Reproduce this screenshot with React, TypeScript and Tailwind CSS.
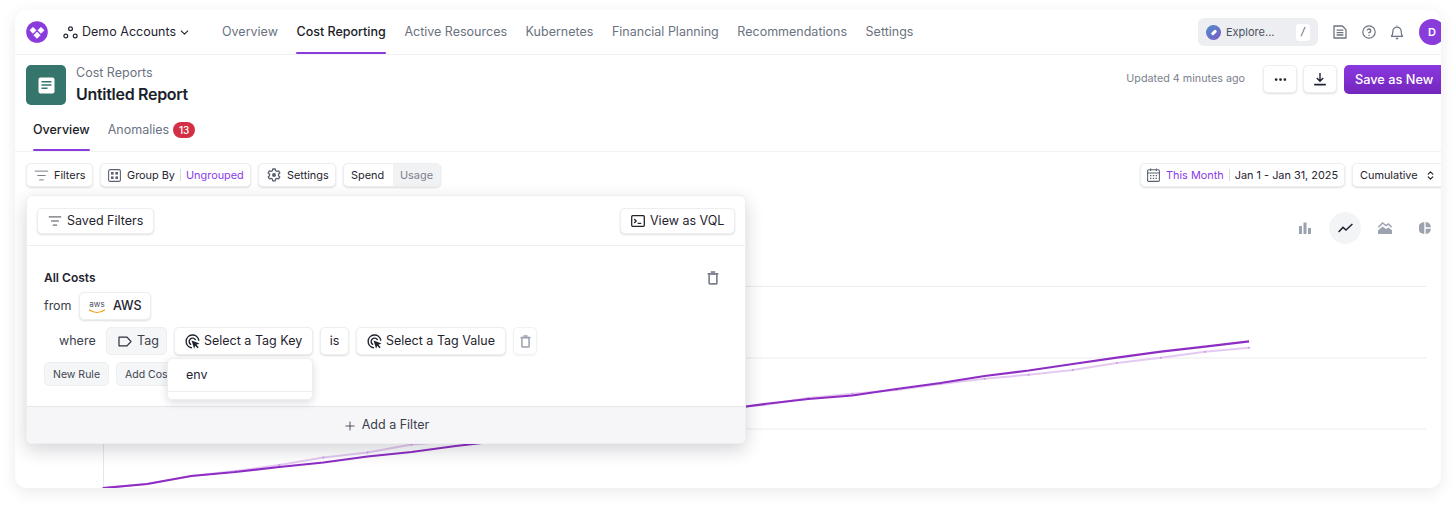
import React from 'react';
import { ChevronDown, ChevronsUpDown, Ellipsis, ListFilter, Plus } from 'lucide-react';

const chartX = (i: number) => 103 + i * 44.08;

const mainLine = [488, 484, 476, 472, 467, 462.5, 456.5, 452, 446, 441, 435, 429, 422, 416, 410, 404, 399, 395.5, 389, 383, 376, 370.5, 364, 357.7, 351.7, 346.7, 341.3];
const faintLine = [488, 484, 476, 471, 465, 457.5, 452.6, 444.6, 441, 436, 430, 424, 418, 412, 408, 405, 398, 393.7, 390, 384, 378.7, 374.7, 370, 363, 357.7, 351.7, 347.7];

const toPoints = (ys: number[]) => ys.map((y, i) => `${chartX(i)},${y - 188}`).join(' ');

const Btn = ({ className = '', children }: { className?: string; children: React.ReactNode }) => (
  <div className={`flex items-center bg-white border border-[#eceef0] rounded-[5px] shadow-[0_1px_2px_rgba(16,24,40,0.14)] ${className}`}>
    {children}
  </div>
);

const TargetIcon = () => (
  <svg width="15" height="15" viewBox="0 0 16 16" fill="none" stroke="#20242e" strokeWidth="1.5" strokeLinecap="round" className="shrink-0">
    <path d="M6.8 14.6A6.8 6.8 0 1 1 14.7 6.6" />
    <path d="M6 11A3.6 3.6 0 1 1 11 6" />
    <path d="M7 7l8.4 3-3.2 1.4 2.4 2.6-1.2 1.2-2.5-2.6-1.2 3z" fill="#20242e" stroke="none" />
  </svg>
);

const TrashIcon = ({ size, color }: { size: number; color: string }) => (
  <svg width={size} height={size} viewBox="0 0 16 16" fill="none" stroke={color} strokeWidth="1.9">
    <path d="M1.8 3.2h12.4" />
    <path d="M5.5 1.2h5" />
    <rect x="3.6" y="3.2" width="8.8" height="11.6" rx="0.8" />
  </svg>
);

const App = () => {
  return (
    <div className="w-[1456px] h-[508px] bg-white pt-[10px] pl-[15px] overflow-hidden font-['Inter',sans-serif]">
      <div className="relative w-[1426px] h-[478px] bg-white rounded-[12px] overflow-hidden shadow-[0_4px_16px_rgba(16,24,40,0.09)]">
        {/* top nav */}
        <div className="flex items-center h-[45px] pl-[11px] border-b border-[#f1f2f4] w-[1430px]">
          <svg width="22" height="22" viewBox="0 0 22 22" className="shrink-0">
            <circle cx="11" cy="11" r="10.8" fill="#8a3bdc" />
            <path d="M7 6.2l3.1 3.1L7 12.4 3.9 9.3z" fill="#fff" stroke="#fff" strokeWidth="0.6" strokeLinejoin="round" />
            <path d="M15 6.2l3.1 3.1-3.1 3.100-3.100-3.100z" fill="#fff" stroke="#fff" strokeWidth="0.6" strokeLinejoin="round" />
            <path d="M11 11l3.2 3.200-3.200 3.200-3.200-3.200z" fill="#fff" stroke="#fff" strokeWidth="0.6" strokeLinejoin="round" />
          </svg>
          <svg width="15" height="15" viewBox="0 0 15 15" fill="none" stroke="#1f2430" strokeWidth="1.2" className="ml-[15px] shrink-0">
            <circle cx="7.5" cy="3.8" r="1.9" />
            <circle cx="2.8" cy="11" r="1.9" />
            <circle cx="12.2" cy="11" r="1.9" />
          </svg>
          <span className="ml-[4px] text-[12.5px] text-[#1f2430] whitespace-nowrap">Demo Accounts</span>
          <ChevronDown size={13} strokeWidth={2} className="ml-[2px] text-[#1f2430]" />
          <nav className="flex h-full ml-[31px] gap-[18.6px] text-[12.5px]">
            <a className="flex items-center text-[#6b7280]">Overview</a>
            <a className="relative flex items-center font-medium text-[#1a1d27]">
              Cost Reporting
              <span className="absolute left-0 right-0 bottom-0 h-[2.5px] rounded-[1px] bg-[#8a3bdc]" />
            </a>
            <a className="flex items-center text-[#6b7280]">Active Resources</a>
            <a className="flex items-center text-[#6b7280]">Kubernetes</a>
            <a className="flex items-center text-[#6b7280]">Financial Planning</a>
            <a className="flex items-center text-[#6b7280]">Recommendations</a>
            <a className="flex items-center text-[#6b7280]">Settings</a>
          </nav>
          <div className="flex items-center ml-auto w-[120px] h-[28px] rounded-[6px] bg-[#eceef1] pl-[8px] pr-[8px] mr-[15px]">
            <span className="flex items-center justify-center w-[15px] h-[15px] rounded-full bg-gradient-to-br from-[#3f8fc8] to-[#7b55c7]">
              <span className="w-[6px] h-[3px] rounded-[1px] -rotate-45 bg-white" />
            </span>
            <span className="ml-[5px] text-[11px] text-[#4b5160]">Explore...</span>
            <span className="ml-auto flex items-center justify-center w-[14px] h-[17px] rounded-[3px] bg-white text-[10.5px] italic text-[#4b5160]">/</span>
          </div>
          <svg width="14" height="14" viewBox="0 0 14 14" fill="none" stroke="#6b7280" strokeWidth="1.3" className="shrink-0">
            <path d="M1 1h8.4L13 4.6V13H1z" strokeLinejoin="round" />
            <path d="M3.6 5.2h6.8M3.6 7.6h6.8M3.6 10h6.8" />
          </svg>
          <svg width="14" height="14" viewBox="0 0 14 14" fill="none" stroke="#6b7280" strokeWidth="1.2" className="ml-[15px] shrink-0">
            <circle cx="7" cy="7" r="6.2" />
            <path d="M5.2 5.4A1.8 1.8 0 1 1 7 7.6v1" strokeWidth="1.3" />
            <circle cx="7" cy="10.4" r="0.7" fill="#6b7280" stroke="none" />
          </svg>
          <svg width="14" height="15" viewBox="0 0 14 15" fill="none" stroke="#6b7280" strokeWidth="1.2" className="ml-[14px] shrink-0">
            <path d="M1.4 11.4c.8-.9 1.4-1.6 1.4-5a4.2 4.2 0 0 1 8.4 0c0 3.4.6 4.1 1.4 5z" strokeLinejoin="round" />
            <path d="M5.8 13.4h2.4" strokeWidth="1.5" />
            <path d="M7 1V.4" />
          </svg>
          <span className="flex items-center justify-center shrink-0 ml-[15px] w-[26px] h-[26px] rounded-full bg-[#8a3bdc] text-[11px] font-semibold text-white">D</span>
        </div>

        {/* report header */}
        <div className="flex items-start h-[52px] pt-[10px] pl-[11px] w-[1430px]">
          <div className="flex items-center justify-center w-[40px] h-[40px] rounded-[5px] bg-[#35756b]">
            <svg width="17" height="17" viewBox="0 0 17 17">
              <rect x="0.5" y="0.5" width="16" height="16" rx="2" fill="#fff" />
              <path d="M3.5 4.8h10M3.5 8h10M3.5 11.2h6" stroke="#35756b" strokeWidth="1.5" />
            </svg>
          </div>
          <div className="ml-[10px] flex flex-col">
            <span className="text-[12.5px] leading-[15px] text-[#6b7280]">Cost Reports</span>
            <span className="mt-[4px] text-[16px] leading-[20px] font-semibold tracking-[-0.3px] text-[#1a1f2c]">Untitled Report</span>
          </div>
          <span className="ml-auto mt-[7px] text-[10.75px] leading-[14px] text-[#7b808c]">Updated 4 minutes ago</span>
          <Btn className="ml-[18px] w-[34px] h-[28px] justify-center">
            <Ellipsis size={15} strokeWidth={2.4} className="text-[#1f2430]" />
          </Btn>
          <Btn className="ml-[6px] w-[34px] h-[28px] justify-center">
            <svg width="14" height="14" viewBox="0 0 14 14" fill="none" stroke="#1f2430" strokeWidth="1.4">
              <path d="M7 1v8M3.8 6L7 9.2 10.2 6" />
              <path d="M1.2 12.6h11.6" strokeWidth="1.8" />
            </svg>
          </Btn>
          <div className="flex items-center ml-[7px] pl-[11px] w-[101px] h-[29px] rounded-[5px] bg-gradient-to-b from-[#8a38e0] to-[#7426bc] text-[12.75px] font-medium text-white whitespace-nowrap">
            Save as New
          </div>
        </div>

        {/* page tabs */}
        <div className="flex h-[45px] pl-[18px] pt-[2px] gap-[18px] border-b border-[#f1f2f4] text-[12.5px]">
          <a className="relative flex items-center font-medium text-[#1a1d27]">
            Overview
            <span className="absolute left-0 right-0 bottom-0 h-[2px] rounded-[1px] bg-[#8a3bdc]" />
          </a>
          <a className="flex items-center text-[#6b7280]">
            Anomalies
            <span className="ml-[4px] flex items-center justify-center w-[22px] h-[16px] rounded-full bg-[#d32f45] text-[10px] font-medium text-white">13</span>
          </a>
        </div>

        {/* toolbar */}
        <div className="flex items-center h-[24px] mt-[11px] pl-[11px] text-[10.9px] text-[#1f2430] w-[1430px]">
          <Btn className="w-[67px] h-[24px] pl-[7px]">
            <ListFilter size={15} strokeWidth={1.3} className="text-[#5b6170]" />
            <span className="ml-[5px] pt-px">Filters</span>
          </Btn>
          <Btn className="ml-[7px] w-[151px] h-[24px] pl-[7px]">
            <svg width="13" height="13" viewBox="0 0 13 13" fill="none" stroke="#5b6170" strokeWidth="1.1">
              <rect x="0.6" y="0.6" width="11.8" height="11.8" rx="1.5" />
              <rect x="3" y="3" width="2.6" height="2.6" fill="#5b6170" stroke="none" />
              <rect x="7.4" y="3" width="2.6" height="2.6" fill="#5b6170" stroke="none" />
              <rect x="3" y="7.4" width="2.6" height="2.6" fill="#5b6170" stroke="none" />
              <rect x="7.4" y="7.4" width="2.6" height="2.6" fill="#5b6170" stroke="none" />
            </svg>
            <span className="ml-[6px] pt-px">Group By</span>
            <span className="ml-[5px] h-[12px] border-l border-[#d8dbe0]" />
            <span className="ml-[5px] pt-px text-[#8a3be8]">Ungrouped</span>
          </Btn>
          <Btn className="ml-[7px] w-[78px] h-[24px] pl-[8px]">
            <svg width="14" height="14" viewBox="0 0 14 14" fill="none" stroke="#5b6170" strokeWidth="1.3" strokeLinejoin="round" className="shrink-0">
              <path d="M5.8 1h2.4l.4 1.7 1.3.7 1.7-.5 1.2 2-1.3 1.2v1.600l1.300 1.200-1.200 2-1.700-.5-1.300.7-.4 1.700H5.800l-.4-1.700-1.300-.7-1.700.5-1.200-2 1.300-1.200V6.100L1.200 4.900l1.200-2 1.700.5 1.300-.7z" />
              <circle cx="7" cy="7" r="2" fill="#5b6170" stroke="none" />
            </svg>
            <span className="ml-[6px] pt-px">Settings</span>
          </Btn>
          <Btn className="ml-[7px] w-[98px] h-[24px] overflow-hidden">
            <span className="flex items-center h-full pl-[7px] pt-px w-[49px]">Spend</span>
            <span className="flex items-center h-full pl-[7px] pt-px flex-1 bg-[#f1f2f4] text-[#7b808c]">Usage</span>
          </Btn>
          <Btn className="ml-auto w-[205px] h-[24px] pl-[6px]">
            <svg width="13" height="14" viewBox="0 0 13 14" fill="none" stroke="#5b6170" strokeWidth="1.1">
              <rect x="0.6" y="1.8" width="11.8" height="11.6" rx="1.2" />
              <path d="M0.6 5h11.8M3.6 0.4v2.6M9.4 0.4v2.6" />
              <path d="M3 7.6h1.4M5.8 7.6h1.4M8.6 7.6h1.4M3 10.4h1.4M5.8 10.4h1.4M8.6 10.4h1.4" />
            </svg>
            <span className="ml-[6px] pt-px text-[#8a3be8]">This Month</span>
            <span className="ml-[5px] h-[12px] border-l border-[#d8dbe0]" />
            <span className="ml-[5px] pt-px">Jan 1 - Jan 31, 2025</span>
          </Btn>
          <Btn className="ml-[7px] w-[93px] h-[24px] pl-[7px]">
            <span className="pt-px">Cumulative</span>
            <ChevronsUpDown size={11} strokeWidth={2.6} className="ml-[7px]" />
          </Btn>
        </div>

        {/* chart */}
        <div className="relative mt-[1px] h-[300px]">
          <div className="flex justify-end items-center gap-[8px] pt-[24px] w-[1426px]">
            <span className="flex items-center justify-center w-[32px] h-[32px]">
              <svg width="12" height="12" viewBox="0 0 12 12" fill="#9ca3af">
                <rect x="0" y="4" width="3" height="8" />
                <rect x="4.5" y="0.5" width="3" height="11.5" />
                <rect x="9" y="6" width="3" height="6" />
              </svg>
            </span>
            <span className="flex items-center justify-center w-[32px] h-[32px] rounded-full bg-[#f3f4f6]">
              <svg width="15" height="10" viewBox="0 0 15 10" fill="none" stroke="#1f2430" strokeWidth="1.5">
                <path d="M0.6 9L5 4.4 8 7 14.4 1" />
              </svg>
            </span>
            <span className="flex items-center justify-center w-[32px] h-[32px]">
              <svg width="14" height="12" viewBox="0 0 14 12" fill="none">
                <path d="M0.4 5.2L4.6 1 8 3.6 10.4 2 13.6 5.2" stroke="#9ca3af" strokeWidth="1.5" />
                <path d="M0 8.4L4.6 4.4 8 7 10.4 5.6 14 8.2V12H0z" fill="#9ca3af" />
              </svg>
            </span>
            <span className="flex items-center justify-center w-[32px] h-[32px]">
              <svg width="12" height="12" viewBox="0 0 12 12" fill="#9ca3af">
                <path d="M5.3 0v12A6 6 0 0 1 5.3 0z" />
                <path d="M6.7 0A6 6 0 0 1 12 5.3H6.7z" />
                <path d="M6.7 6.7H12A6 6 0 0 1 6.7 12z" />
              </svg>
            </span>
          </div>
          <svg width="1426" height="300" viewBox="15 0 1426 300" fill="none" className="absolute left-0 top-0">
            <path d="M103 98.5H1426M103 170H1426M103 241H1426" stroke="#ececee" strokeWidth="1" />
            <path d="M103.5 230V300" stroke="#e5e7eb" strokeWidth="1" />
            <polyline points={toPoints(faintLine)} stroke="#e4c9f2" strokeWidth="2" />
            {faintLine.map((y, i) => (
              <circle key={i} cx={chartX(i)} cy={y - 188} r="1" fill="#c79be0" />
            ))}
            <polyline points={toPoints(mainLine)} stroke="#8e2dc4" strokeWidth="2.2" />
          </svg>
        </div>

        {/* filter popover */}
        <div className="absolute left-[11px] top-[185px] w-[720px] h-[249px] flex flex-col bg-white rounded-[6px] border border-[#eceef0] shadow-[0_6px_18px_rgba(16,24,40,0.18)] text-[#1f2430]">
          <div className="flex items-center justify-between h-[50px] px-[10px] border-b border-[#eeeff1] text-[12.5px]">
            <Btn className="w-[117px] h-[26px] pl-[10px] pt-px">
              <ListFilter size={14} strokeWidth={1.4} />
              <span className="ml-[5px]">Saved Filters</span>
            </Btn>
            <Btn className="w-[115px] h-[26px] pl-[10px] pt-px">
              <svg width="14" height="12" viewBox="0 0 14 12" fill="none" stroke="#20242e" strokeWidth="1.3">
                <rect x="0.7" y="0.7" width="12.6" height="10.6" rx="1" />
                <path d="M3.2 4l2 2-2 2M6.6 8.4h3.6" />
              </svg>
              <span className="ml-[5px]">View as VQL</span>
            </Btn>
          </div>
          <div className="relative flex-1 pl-[17px] pt-[25px] text-[12.5px]">
            <div className="flex items-center justify-between h-[14px] pr-[25px]">
              <span className="font-semibold text-[12px]">All Costs</span>
              <TrashIcon size={14} color="#7b808c" />
            </div>
            <div className="flex items-center mt-[7px] h-[28px]">
              <span className="w-[35px] text-[#3a3f4b]">from</span>
              <Btn className="w-[72px] h-[28px] pl-[8px] pt-px">
                <span className="relative flex justify-center w-[18px] h-[14px] text-[8px] leading-[9px] text-[#4b5160]">
                  aws
                  <svg width="18" height="5" viewBox="0 0 18 5" fill="none" className="absolute left-0 bottom-0">
                    <path d="M1 0.8C6 4.2 12 4.2 17 0.8" stroke="#f59e0b" strokeWidth="1.1" />
                  </svg>
                </span>
                <span className="ml-[7px] font-medium">AWS</span>
              </Btn>
            </div>
            <div className="flex items-center mt-[7px] h-[28px] pl-[15px]">
              <span className="w-[47px] pt-px text-[#3a3f4b]">where</span>
              <div className="flex items-center w-[61px] h-[28px] pl-[11px] pt-px rounded-[5px] border border-[#eceef0] bg-[#f5f6f7] text-[#3a3f4b]">
                <svg width="14" height="11" viewBox="0 0 14 11" fill="none" stroke="#2b2f3a" strokeWidth="1.2">
                  <path d="M1 1.2h8l4 4.3-4 4.3H1z" strokeLinejoin="round" />
                </svg>
                <span className="ml-[5px]">Tag</span>
              </div>
              <Btn className="ml-[7px] w-[139px] h-[28px] pl-[10px] pt-px">
                <TargetIcon />
                <span className="ml-[4px] whitespace-nowrap">Select a Tag Key</span>
              </Btn>
              <Btn className="ml-[7px] w-[29px] h-[28px] justify-center pt-px">is</Btn>
              <Btn className="ml-[7px] w-[150px] h-[28px] pl-[10px] pt-px">
                <TargetIcon />
                <span className="ml-[4px] whitespace-nowrap">Select a Tag Value</span>
              </Btn>
              <div className="flex items-center justify-center ml-[7px] w-[24px] h-[28px] rounded-[5px] border border-[#f1f2f4] shadow-[0_1px_2px_rgba(16,24,40,0.05)]">
                <TrashIcon size={13} color="#9ca3af" />
              </div>
            </div>
            <div className="flex items-center mt-[7px] gap-[7px] text-[10.5px] text-[#3f4450]">
              <span className="flex items-center justify-center w-[65px] h-[24px] pt-px rounded-[5px] border border-[#eceef0] bg-[#f5f6f7]">New Rule</span>
              <span className="flex items-center pl-[8px] pt-px w-[80px] h-[24px] rounded-[5px] border border-[#eceef0] bg-[#f5f6f7] whitespace-nowrap">Add Cost</span>
            </div>
            {/* tag key menu */}
            <div className="absolute left-[140px] top-[112px] w-[146px] h-[42px] rounded-[5px] border border-[#eceef0] bg-white shadow-[0_3px_8px_rgba(16,24,40,0.14)]">
              <div className="flex items-center h-[33px] pl-[18px] border-b border-[#eeeff1] text-[12.5px]">env</div>
            </div>
          </div>
          <div className="flex items-center justify-center h-[37px] pt-px rounded-b-[6px] border-t border-[#e6e7ea] bg-[#f6f6f8] text-[12.5px] text-[#3a3f4b]">
            <Plus size={14} strokeWidth={1.5} />
            <span className="ml-[5px]">Add a Filter</span>
          </div>
        </div>
      </div>
    </div>
  );
};

export default App;
